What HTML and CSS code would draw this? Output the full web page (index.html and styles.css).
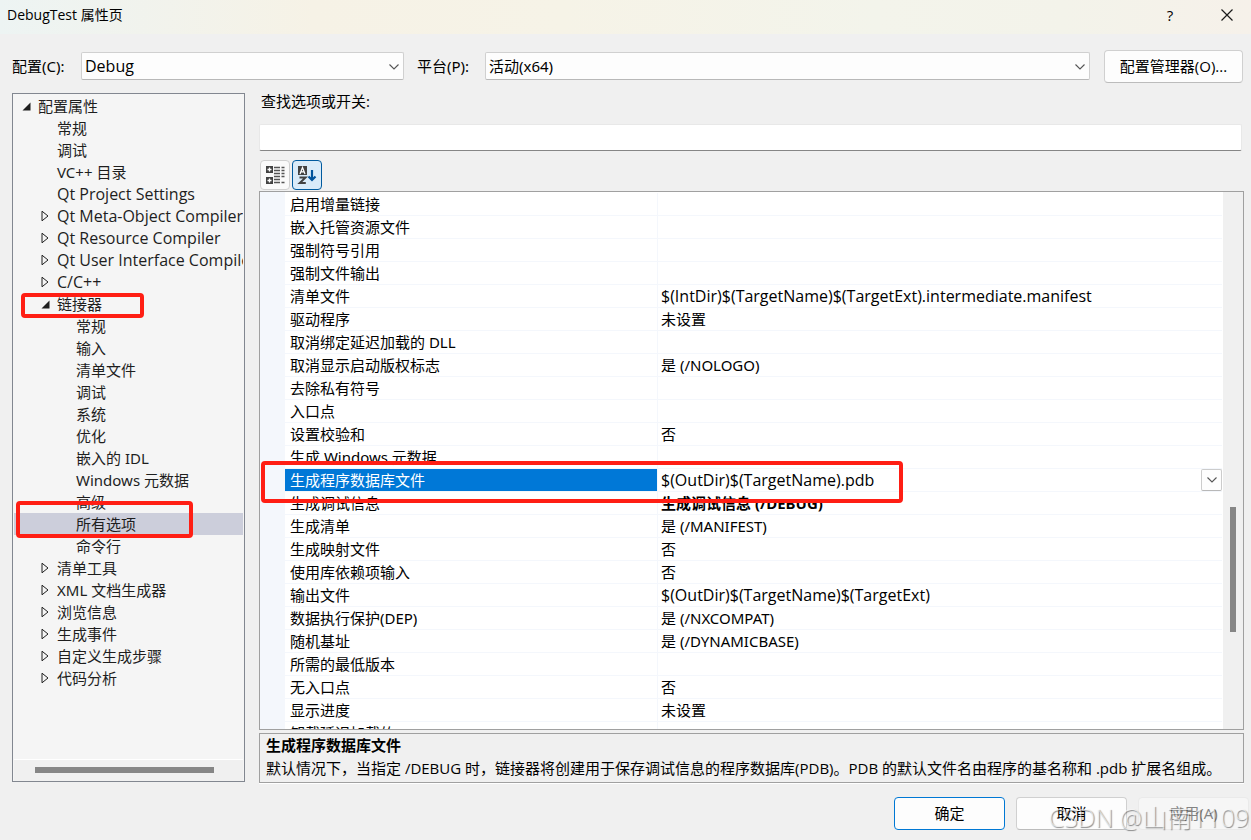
FILE: index.html
```html
<!DOCTYPE html>
<html lang="zh-CN">
<head>
<meta charset="utf-8">
<title>DebugTest 属性页</title>
<link rel="stylesheet" href="styles.css">
</head>
<body>
<svg class="defs" aria-hidden="true">
  <symbol id="closed" viewBox="0 0 8 12"><path d="M1 1.2V10.8L7 6Z" fill="none" stroke="#1e1e1e" stroke-width="1"/></symbol>
  <symbol id="open" viewBox="0 0 9 9"><path d="M8.5 0.5V8.5H0.5Z" fill="#1e1e1e"/></symbol>
  <symbol id="chevron" viewBox="0 0 10 6"><path d="M0.5 0.5L5 5L9.5 0.5" fill="none" stroke="#555" stroke-width="1.1"/></symbol>
</svg>
<div class="window">
  <header class="titlebar">
    <h1 class="title">DebugTest 属性页</h1>
    <button class="caption-btn" type="button" aria-label="帮助">?</button>
    <button class="caption-btn" type="button" aria-label="关闭"><svg width="12" height="12" viewBox="0 0 12 12"><path d="M0.5 0.5L11.5 11.5M11.5 0.5L0.5 11.5" stroke="#1a1a1a" stroke-width="1.2"/></svg></button>
  </header>

  <div class="config">
    <label class="config-label" for="cfg">配置(C):</label>
    <div class="combo combo-config"><select class="latin" id="cfg"><option>Debug</option></select><svg class="combo-arrow"><use href="#chevron"/></svg></div>
    <label class="config-label platform-label" for="plat">平台(P):</label>
    <div class="combo combo-platform"><select id="plat"><option>活动(x64)</option></select><svg class="combo-arrow"><use href="#chevron"/></svg></div>
    <button class="btn btn-manager" type="button">配置管理器(O)...</button>
  </div>

  <main class="main">
    <nav class="tree">
      <ul class="tree-list">
        <li class="node"><span class="twist"><svg class="tw-open"><use href="#open"/></svg></span>配置属性</li>
        <li class="node l1"><span class="twist"></span>常规</li>
        <li class="node l1"><span class="twist"></span>调试</li>
        <li class="node l1"><span class="twist"></span>VC++ 目录</li>
        <li class="node l1 latin"><span class="twist"></span>Qt Project Settings</li>
        <li class="node l1 latin"><span class="twist"><svg class="tw-closed"><use href="#closed"/></svg></span>Qt Meta-Object Compiler</li>
        <li class="node l1 latin"><span class="twist"><svg class="tw-closed"><use href="#closed"/></svg></span>Qt Resource Compiler</li>
        <li class="node l1 latin"><span class="twist"><svg class="tw-closed"><use href="#closed"/></svg></span>Qt User Interface Compiler</li>
        <li class="node l1 latin"><span class="twist"><svg class="tw-closed"><use href="#closed"/></svg></span>C/C++</li>
        <li class="node l1"><span class="twist"><svg class="tw-open"><use href="#open"/></svg></span>链接器<span class="mark mark-linker"></span></li>
        <li class="node l2"><span class="twist"></span>常规</li>
        <li class="node l2"><span class="twist"></span>输入</li>
        <li class="node l2"><span class="twist"></span>清单文件</li>
        <li class="node l2"><span class="twist"></span>调试</li>
        <li class="node l2"><span class="twist"></span>系统</li>
        <li class="node l2"><span class="twist"></span>优化</li>
        <li class="node l2"><span class="twist"></span>嵌入的 IDL</li>
        <li class="node l2"><span class="twist"></span>Windows 元数据</li>
        <li class="node l2"><span class="twist"></span>高级</li>
        <li class="node l2 selected"><span class="twist"></span>所有选项<span class="mark mark-all"></span></li>
        <li class="node l2"><span class="twist"></span>命令行</li>
        <li class="node l1"><span class="twist"><svg class="tw-closed"><use href="#closed"/></svg></span>清单工具</li>
        <li class="node l1"><span class="twist"><svg class="tw-closed"><use href="#closed"/></svg></span>XML 文档生成器</li>
        <li class="node l1"><span class="twist"><svg class="tw-closed"><use href="#closed"/></svg></span>浏览信息</li>
        <li class="node l1"><span class="twist"><svg class="tw-closed"><use href="#closed"/></svg></span>生成事件</li>
        <li class="node l1"><span class="twist"><svg class="tw-closed"><use href="#closed"/></svg></span>自定义生成步骤</li>
        <li class="node l1"><span class="twist"><svg class="tw-closed"><use href="#closed"/></svg></span>代码分析</li>
      </ul>
      <div class="hscroll"><div class="hthumb"></div></div>
    </nav>

    <section class="content">
      <label class="search-label" for="search">查找选项或开关:</label>
      <input class="search" id="search" type="text">
      <div class="tools">
        <button class="tool" type="button" aria-label="按分类">
          <svg width="20" height="20" viewBox="0 0 20 20"><path d="M1 1h7v7H1zM1 12h7v7H1z" fill="#424242"/><path d="M4.5 2.5v4M2.5 4.5h4M4.5 13.5v4M2.5 15.5h4" stroke="#fff" stroke-width="1.3"/><path d="M9 2.5h6M9 5.5h6M9 8.5h6M9 11.5h6M9 14.5h6M9 17.5h6M16.5 2.5h3M16.5 5.5h3M16.5 8.5h3M16.5 11.5h3M16.5 17.5h3" stroke="#555" stroke-width="1.3"/></svg>
        </button>
        <button class="tool active" type="button" aria-label="按字母顺序">
          <svg width="20" height="20" viewBox="0 0 20 20"><path d="M1 1h9v9H1z" fill="#424242"/><path d="M3 9L5.5 2.5L8 9M4 6.8h3" fill="none" stroke="#fff" stroke-width="1.2"/><path d="M2.5 12.5h6L2.8 18h6" fill="none" stroke="#424242" stroke-width="2"/><path d="M15 5v10M11.5 11.5L15 15l3.5-3.5" fill="none" stroke="#00539c" stroke-width="2.2"/></svg>
        </button>
      </div>

      <div class="grid">
        <div class="grid-view">
          <table class="props">
            <colgroup><col class="c-gutter"><col class="c-name"><col></colgroup>
            <tbody>
              <tr><td></td><th scope="row">启用增量链接</th><td></td></tr>
              <tr><td></td><th scope="row">嵌入托管资源文件</th><td></td></tr>
              <tr><td></td><th scope="row">强制符号引用</th><td></td></tr>
              <tr><td></td><th scope="row">强制文件输出</th><td></td></tr>
              <tr><td></td><th scope="row">清单文件</th><td class="latin">$(IntDir)$(TargetName)$(TargetExt).intermediate.manifest</td></tr>
              <tr><td></td><th scope="row">驱动程序</th><td>未设置</td></tr>
              <tr><td></td><th scope="row">取消绑定延迟加载的 DLL</th><td></td></tr>
              <tr><td></td><th scope="row">取消显示启动版权标志</th><td>是 (/NOLOGO)</td></tr>
              <tr><td></td><th scope="row">去除私有符号</th><td></td></tr>
              <tr><td></td><th scope="row">入口点</th><td></td></tr>
              <tr><td></td><th scope="row">设置校验和</th><td>否</td></tr>
              <tr><td></td><th scope="row">生成 Windows 元数据</th><td></td></tr>
              <tr class="current"><td class="anchor"><span class="mark mark-pdb"></span></td><th scope="row">生成程序数据库文件</th><td><div class="editor"><span class="latin">$(OutDir)$(TargetName).pdb</span><button class="drop" type="button" aria-label="展开"><svg width="10" height="6"><use href="#chevron"/></svg></button></div></td></tr>
              <tr><td></td><th scope="row">生成调试信息</th><td class="bold">生成调试信息 (/DEBUG)</td></tr>
              <tr><td></td><th scope="row">生成清单</th><td>是 (/MANIFEST)</td></tr>
              <tr><td></td><th scope="row">生成映射文件</th><td>否</td></tr>
              <tr><td></td><th scope="row">使用库依赖项输入</th><td>否</td></tr>
              <tr><td></td><th scope="row">输出文件</th><td class="latin">$(OutDir)$(TargetName)$(TargetExt)</td></tr>
              <tr><td></td><th scope="row">数据执行保护(DEP)</th><td>是 (/NXCOMPAT)</td></tr>
              <tr><td></td><th scope="row">随机基址</th><td>是 (/DYNAMICBASE)</td></tr>
              <tr><td></td><th scope="row">所需的最低版本</th><td></td></tr>
              <tr><td></td><th scope="row">无入口点</th><td>否</td></tr>
              <tr><td></td><th scope="row">显示进度</th><td>未设置</td></tr>
              <tr><td></td><th scope="row">卸载延迟加载的 DLL</th><td></td></tr>
            </tbody>
          </table>
        </div>
        <div class="vscroll"><div class="vthumb"></div></div>
      </div>

      <div class="desc">
        <h2 class="desc-title">生成程序数据库文件</h2>
        <p class="desc-text">默认情况下，当指定 /DEBUG 时，链接器将创建用于保存调试信息的程序数据库(PDB)。PDB 的默认文件名由程序的基名称和 .pdb 扩展名组成。</p>
      </div>
    </section>
  </main>

  <footer class="footer">
    <button class="btn primary" type="button">确定</button>
    <button class="btn" type="button">取消</button>
    <button class="btn" type="button" disabled>应用(A)</button>
    <span class="watermark">CSDN @山南1109</span>
  </footer>
</div>
</body>
</html>
```
FILE: styles.css
```css
* { box-sizing: border-box; }
body {
  margin: 0;
  background: #f0f0f0;
  color: #000;
  font: 15px/22px "Open Sans", "Noto Sans CJK SC", sans-serif;
}
button, input, select { font: inherit; color: inherit; margin: 0; }
.defs { display: none; }
svg { display: block; flex: none; }

.window { height: 100vh; display: flex; flex-direction: column; overflow: hidden; }

.titlebar {
  flex: none;
  height: 34px;
  display: flex;
  align-items: center;
  padding: 0 4px 4px 7px;
  background: linear-gradient(90deg, #edf4f3, #f6f2e6 25%, #f6f3e7 45%, #f3f4eb 70%, #f3f3ea 85%, #f6f1ea);
}
.title { margin: 0 auto 0 0; font-size: 14px; font-weight: 400; }
.caption-btn {
  width: 40px;
  height: 30px;
  margin-left: 17px;
  padding: 0;
  display: flex;
  align-items: center;
  justify-content: center;
  border: 0;
  background: none;
}

.config { flex: none; display: flex; align-items: center; padding: 16px 8px 10px 12px; }
.config-label { width: 69px; margin-bottom: 2px; white-space: nowrap; font-family: "Noto Sans", "Noto Sans CJK SC", sans-serif; }
.platform-label { width: 68px; margin-left: 13px; }
.combo { position: relative; height: 28px; margin-bottom: 2px; font-family: "Noto Sans", "Noto Sans CJK SC", sans-serif; }
.combo-config { flex: 323 1 0; }
.combo-platform { flex: 605 1 0; }
.combo select {
  appearance: none;
  display: block;
  width: 100%;
  height: 100%;
  padding: 0 24px 0 3px;
  background: #fdfdfd;
  border: 1px solid #d0d0d0;
  border-bottom-color: #b8b8b8;
  border-radius: 2px;
}
.combo-arrow { position: absolute; right: 5px; top: 12px; width: 10px; height: 6px; pointer-events: none; }

.btn {
  width: 111px;
  height: 33px;
  padding: 0 0 2px;
  background: #fdfdfd;
  border: 1px solid #d0d0d0;
  border-bottom-color: #bcbcbc;
  border-radius: 4px;
}
.btn-manager { width: 139px; margin-left: 14px; }
.btn.primary { border-color: #0078d4; }
.btn:disabled { color: #838383; background: #f6f6f6; border-color: #eaeaea; }

.main { flex: 1; min-height: 0; display: flex; gap: 14px; padding: 0 7px 0 12px; }

.tree {
  flex: none;
  width: 233px;
  margin-bottom: 1px;
  display: flex;
  flex-direction: column;
  padding: 1px 1px 0;
  border: 1px solid #828790;
  background: #f5f5f5;
  color: #1e1e1e;
  font-family: "Noto Sans", "Noto Sans CJK SC", sans-serif;
}
.tree-list { flex: 1; min-height: 0; margin: 0; padding: 0; list-style: none; overflow: hidden; }
.node { position: relative; height: 22px; display: flex; white-space: nowrap; padding-left: 5px; }
.l1 { padding-left: 24px; }
.l2 { padding-left: 43px; }
.twist { flex: none; width: 19px; display: flex; align-items: center; padding-left: 3px; }
.tw-open { width: 9px; height: 9px; }
.tw-closed { width: 8px; height: 12px; }
.selected { background: #cccedb; }
.hscroll { flex: none; height: 22px; padding: 7px 29px 0 21px; border-top: 1px solid #fff; background: #f0f0f0; }
.hthumb { height: 6px; background: #868686; }

.mark { position: absolute; z-index: 2; border: 4px solid #ff1e14; border-radius: 4px; pointer-events: none; }
.mark-linker { left: 7px; top: 0; width: 123px; height: 25px; }
.mark-all { left: 2px; top: -12px; width: 177px; height: 37px; }
.mark-pdb { left: 1px; top: -8px; width: 642px; height: 42px; }

.content { flex: 1; min-width: 0; display: flex; flex-direction: column; }
.search-label { padding: 0 2px; line-height: 16px; }
.search {
  height: 27px;
  margin: 15px 2px 9px 0;
  padding: 0 4px;
  background: #fff;
  border: 1px solid #e8e8e8;
  border-bottom-color: #868686;
  border-radius: 2px;
}
.tools { display: flex; gap: 2px; padding: 0 1px 1px; }
.tool {
  width: 30px;
  height: 30px;
  padding: 0;
  display: flex;
  align-items: center;
  justify-content: center;
  background: #fafafa;
  border: 1px solid #d0d0d0;
  border-radius: 4px;
}
.tool.active { border-color: #005a9e; background: #d9ebf9; }

.grid { flex: 1; min-height: 0; display: flex; border: 1px solid #a0a0a0; background: #fff; }
.grid-view {
  flex: 1;
  min-width: 0;
  overflow: hidden;
  padding: 1px 1px 0 0;
  background: linear-gradient(90deg, #f4f7fc 25px, #fff 25px);
}
.props {
  width: 100%;
  table-layout: fixed;
  border-collapse: separate;
  border-spacing: 0;
  font-family: "Noto Sans", "Noto Sans CJK SC", sans-serif;
}
.c-gutter { width: 25px; }
.c-name { width: 373px; }
.props tr { height: 23px; }
.props th, .props td {
  height: 23px;
  padding: 0 3px;
  text-align: left;
  font-weight: 400;
  border-bottom: 1px solid #f4f7fc;
  white-space: nowrap;
}
.props th { padding-left: 5px; border-right: 1px solid #f4f7fc; }
.props .bold { font-weight: 700; }
.props .anchor { position: relative; padding: 0; }
.current th { background: #0078d7; color: #fff; }
.props .current td:last-child { padding-right: 0; }
.editor { display: flex; justify-content: space-between; height: 22px; }
.drop {
  width: 21px;
  height: 22px;
  padding: 0;
  display: flex;
  align-items: center;
  justify-content: center;
  background: #fdfdfd;
  border: 1px solid #ccc;
  border-bottom-color: #b8b8b8;
  border-radius: 2px;
}
.vscroll { flex: none; width: 20px; padding-right: 7px; display: flex; flex-direction: column; align-items: flex-end; background: #f0f0f0; }
.vscroll::before { content: ""; flex: 315 1 0; }
.vscroll::after { content: ""; flex: 97 1 0; }
.vthumb { width: 6px; height: 125px; background: #868686; }

.desc { flex: none; margin-top: 3px; padding: 0 6px 3px; border: 1px solid #a0a0a0; box-shadow: 0 1px #fff; }
.desc-title, .desc-text { margin: 0; font-size: 15px; line-height: 22px; white-space: nowrap; }
.desc-title { margin-bottom: 1px; }

.footer { position: relative; flex: none; display: flex; justify-content: flex-end; gap: 11px; padding: 14px 2px 10px; }
.watermark {
  position: absolute;
  right: 2px;
  top: 18px;
  font-size: 25px;
  font-weight: 300;
  line-height: 32px;
  color: rgba(255, 255, 255, 0.6);
  text-shadow: 1px 1px 1px rgba(0, 0, 0, 0.45);
  white-space: nowrap;
  pointer-events: none;
}

.latin { font-family: "Open Sans", sans-serif; font-size: 16px; }
```
